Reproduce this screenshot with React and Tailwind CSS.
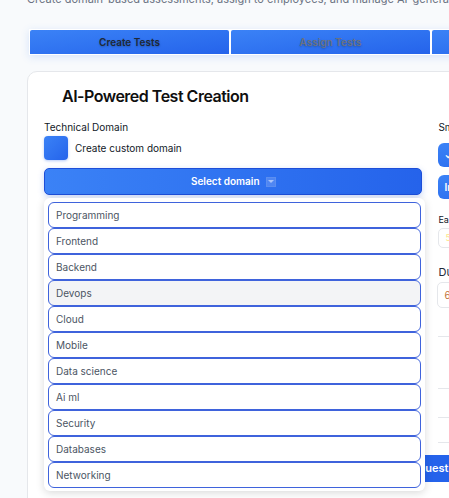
import React from 'react';

const domains = [
  'Programming',
  'Frontend',
  'Backend',
  'Devops',
  'Cloud',
  'Mobile',
  'Data science',
  'Ai ml',
  'Security',
  'Databases',
  'Networking',
];

const tabs = ['Create Tests', 'Assign Tests', 'Manage Tests'];

export default function App() {
  return (
    <div className="w-[449px] h-[498px] overflow-hidden bg-[#f8fafc] font-['Inter',sans-serif]">
      <div className="w-[820px] pl-[27px]">
        <p className="-mt-[8px] text-[11px] leading-[14px] text-gray-500 whitespace-nowrap">
          Create domain-based assessments, assign to employees, and manage AI-generated tests and results for your team.
        </p>

        {/* tab bar */}
        <div className="mt-[23px] ml-[2px] flex gap-[2px] bg-white p-[1px] shadow-[0_2px_8px_rgba(59,130,246,0.18)] w-max">
          {tabs.map((t, i) => (
            <div
              key={t}
              className={`w-[199px] h-[24px] flex items-center justify-center rounded-t-[2px] bg-gradient-to-br from-[#3b82f6] to-[#2563eb] text-[10px] font-semibold [text-shadow:0_1px_2px_rgba(0,0,0,0.25)] ${
                i === 0 ? 'text-[#1f2937]' : 'text-[#6b7280]'
              }`}
            >
              {t}
            </div>
          ))}
        </div>

        {/* card */}
        <div className="mt-4 w-[782px] rounded-[10px] border border-gray-200 bg-white px-4 pt-[12px] pb-8">
          <h1 className="pl-[18px] text-[16px] leading-[24px] font-semibold tracking-[-0.5px] text-[#0f0f0f]">
            AI-Powered Test Creation
          </h1>

          <div className="flex gap-4 items-start">
            {/* left column */}
            <div className="relative w-[380px] mt-3">
              <p className="text-[10px] leading-[14px] text-[#111827]">Technical Domain</p>
              <div className="mt-[2px] flex items-center gap-[7px]">
                <div className="w-[24px] h-[24px] rounded-[4px] bg-gradient-to-br from-[#3b82f6] to-[#2563eb] shadow-[0_1px_3px_rgba(37,99,235,0.35)]" />
                <span className="text-[10px] text-[#111827]">Create custom domain</span>
              </div>
              <button className="mt-2 w-full h-[27px] flex items-center justify-center gap-[6px] rounded-[5px] border border-[#1d4ed8] bg-gradient-to-r from-[#3b82f6] to-[#2563eb] text-[10px] font-semibold text-white shadow-[0_2px_6px_rgba(37,99,235,0.25)]">
                Select domain
                <span className="w-[10px] h-[10px] flex items-center justify-center border border-[#5b8ef0] bg-[#4f86f3]">
                  <span className="w-0 h-0 border-x-[3px] border-x-transparent border-t-[3px] border-t-[#a9c4fa]" />
                </span>
              </button>

              {/* dropdown */}
              <div className="absolute left-0 top-[78px] z-10 w-[381px] rounded-[6px] bg-white p-[4px] pb-[3px] shadow-[0_2px_8px_rgba(0,0,0,0.15)]">
                {domains.map((d) => (
                  <div
                    key={d}
                    className={`h-[26px] flex items-center rounded-[6px] border border-[#3f63dc] pl-[7px] text-[10px] text-[#4b5563] ${
                      d === 'Devops' ? 'bg-[#f3f4f6]' : 'bg-white'
                    }`}
                  >
                    {d}
                  </div>
                ))}
              </div>
            </div>

            {/* right column */}
            <div className="w-[355px] mt-3">
              <p className="text-[10px] leading-[14px] text-[#111827]">Smart Question Options</p>
              <div className="mt-[9px] h-[24px] rounded-[6px] bg-gradient-to-br from-[#3b82f6] to-[#2563eb] flex items-center pl-[6px] text-[10px] font-semibold text-white">
                ✓ Auto-generate questions
              </div>
              <div className="mt-2 h-[24px] rounded-[6px] bg-gradient-to-br from-[#3b82f6] to-[#2563eb] flex items-center pl-[6px] text-[10px] font-semibold text-white">
                Include explanations
              </div>
              <p className="mt-[15px] text-[9px] leading-[12px] text-[#111827]">Easy questions</p>
              <div className="mt-[2px] h-[20px] rounded-[5px] border border-gray-200 flex items-center pl-[6px] text-[9px] text-[#fde68a]">
                5
              </div>
              <p className="mt-[17px] text-[11px] leading-[14px] text-[#1e293b]">Duration (minutes)</p>
              <div className="mt-[3px] -ml-[1px] h-[26px] rounded-[5px] border border-gray-200 flex items-center pl-[6px] text-[10px] text-[#c2733a]">
                60
              </div>
              <div className="mt-[28px] h-[52px] border-t border-gray-200" />
              <div className="h-[29px] border-t border-gray-200" />
              <div className="h-[25px] border-t border-gray-200" />
              <div className="border-t border-gray-200" />
            </div>
          </div>

          <button className="mt-[12px] w-full h-[27px] rounded-[5px] bg-[#2563eb] text-[11px] font-semibold text-white">
            Generate Questions
          </button>
        </div>
      </div>
    </div>
  );
}
